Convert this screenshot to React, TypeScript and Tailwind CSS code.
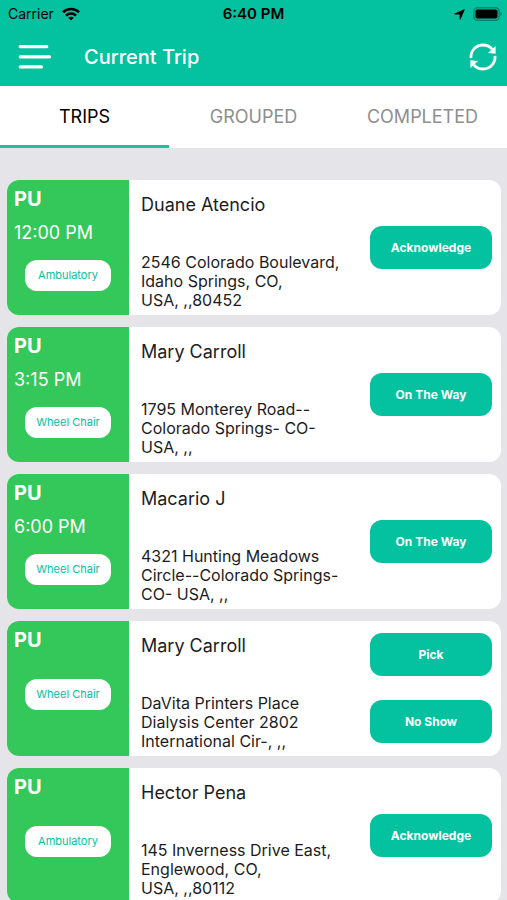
import clsx from "clsx";
import React, { useState } from "react";

type TripAction = "Acknowledge" | "On The Way" | "Pick" | "No Show";

interface Trip {
  id: number;
  type: string;
  time?: string;
  mobility: string;
  name: string;
  address: string;
  actions: TripAction[];
}

const TABS = ["TRIPS", "GROUPED", "COMPLETED"];

const TRIPS: Trip[] = [
  {
    id: 1,
    type: "PU",
    time: "12:00 PM",
    mobility: "Ambulatory",
    name: "Duane Atencio",
    address: "2546 Colorado Boulevard,\nIdaho Springs, CO,\nUSA, ,,80452",
    actions: ["Acknowledge"],
  },
  {
    id: 2,
    type: "PU",
    time: "3:15 PM",
    mobility: "Wheel Chair",
    name: "Mary Carroll",
    address: "1795 Monterey Road--\nColorado Springs- CO-\nUSA, ,,",
    actions: ["On The Way"],
  },
  {
    id: 3,
    type: "PU",
    time: "6:00 PM",
    mobility: "Wheel Chair",
    name: "Macario J",
    address: "4321 Hunting Meadows\nCircle--Colorado Springs-\nCO- USA, ,,",
    actions: ["On The Way"],
  },
  {
    id: 4,
    type: "PU",
    mobility: "Wheel Chair",
    name: "Mary Carroll",
    address: "DaVita Printers Place\nDialysis Center 2802\nInternational Cir-, ,,",
    actions: ["Pick", "No Show"],
  },
  {
    id: 5,
    type: "PU",
    mobility: "Ambulatory",
    name: "Hector Pena",
    address: "145 Inverness Drive East,\nEnglewood, CO,\nUSA, ,,80112",
    actions: ["Acknowledge"],
  },
];

const WifiIcon = () => (
  <svg width="18" height="14" viewBox="0 0 18 14" aria-hidden="true">
    <g fill="none" stroke="black" strokeWidth="2.7">
      <path d="M1 5.2C5.4 0.9 12.6 0.9 17 5.2" />
      <path d="M4 8.6C6.8 5.8 11.2 5.8 14 8.6" />
    </g>
    <path d="M9 13.6L6.2 10.8C7.7 9.4 10.3 9.4 11.8 10.8Z" />
  </svg>
);

const LocationIcon = () => (
  <svg width="11" height="11" viewBox="0 0 11 11" aria-hidden="true">
    <path d="M10.2 0.3C10.6 0.1 10.9 0.4 10.7 0.8L6.5 10.4C6.3 10.9 5.7 10.8 5.7 10.3L5.6 5.6L0.7 5.4C0.2 5.4 0.1 4.8 0.6 4.6Z" />
  </svg>
);

const BatteryIcon = () => (
  <svg width="30" height="14" viewBox="0 0 30 14" aria-hidden="true">
    <rect x="0.8" y="0.8" width="25.4" height="12.4" rx="3.6" fill="none" stroke="#04836d" strokeWidth="1.4" />
    <rect x="2.5" y="2.5" width="22" height="9" rx="1.8" />
    <path d="M27.4 4.8C29.4 5.5 29.4 8.5 27.4 9.2Z" fill="#04836d" />
  </svg>
);

const MenuIcon = () => (
  <svg width="34" height="26" viewBox="0 0 34 26" aria-hidden="true">
    <g stroke="white" strokeWidth="3.2" strokeLinecap="round">
      <path d="M2.2 2.7H28.8" />
      <path d="M2.2 12.8H31.6" />
      <path d="M2.2 22.9H23.4" />
    </g>
  </svg>
);

const RefreshIcon = () => (
  <svg width="28" height="28" viewBox="0 0 28 28" aria-hidden="true">
    <g fill="none" stroke="white" strokeWidth="2.8">
      <path d="M2 15.2C1.4 8 6.8 2 14 2C17.8 2 21 3.5 23.2 6.2" />
      <path d="M26 12.8C26.6 20 21.2 26 14 26C10.2 26 7 24.5 4.8 21.8" />
    </g>
    <path d="M26.6 2.9V10.7L18.9 9.9Z" fill="white" />
    <path d="M1.4 25.1V17.3L9.1 18.1Z" fill="white" />
  </svg>
);

const StatusBar = () => (
  <div className="grid h-7 grid-cols-3 items-center px-2 text-sm text-black">
    <div className="flex items-center gap-2">
      <span>Carrier</span>
      <WifiIcon />
    </div>
    <span className="text-center text-[15px] font-semibold">6:40 PM</span>
    <div className="-mr-1 flex items-center justify-end gap-2">
      <LocationIcon />
      <BatteryIcon />
    </div>
  </div>
);

const TripCard: React.FC<{ trip: Trip }> = ({ trip }) => (
  <li className="flex h-[135px] shrink-0 overflow-hidden rounded-xl bg-white">
    <div className="flex w-[122px] shrink-0 flex-col bg-[#34c759] pt-2 pl-[7px] text-white">
      <span className="text-xl leading-[22px] font-bold">{trip.type}</span>
      <div className="mt-3">
        {trip.time && <p className="text-lg leading-[22px]">{trip.time}</p>}
      </div>
      <span className="mt-4 ml-[11px] flex h-[31px] w-[86px] items-center justify-center rounded-xl bg-white text-[11px] text-[#04c1a0]">
        {trip.mobility}
      </span>
    </div>

    <div className="flex min-w-0 flex-1 flex-col justify-between pt-3.5 pb-[5px] pl-3 text-[#1c1c1e]">
      <h2 className="text-lg leading-[22px]">{trip.name}</h2>
      <p className="text-base leading-[19px] whitespace-pre-line">{trip.address}</p>
    </div>

    <div
      className={clsx(
        "flex w-[131px] shrink-0 flex-col gap-6 pr-[9px]",
        trip.actions.length > 1 ? "pt-3" : "justify-center"
      )}
    >
      {trip.actions.map((action) => (
        <button
          key={action}
          type="button"
          className="h-[43px] w-full rounded-xl bg-[#04c1a0] text-xs font-bold text-white"
        >
          {action}
        </button>
      ))}
    </div>
  </li>
);

const App = () => {
  const [activeTab, setActiveTab] = useState("TRIPS");

  return (
    <div className="flex h-screen flex-col bg-[#e4e4e9] font-['Inter',sans-serif]">
      <header className="shrink-0 bg-[#04c1a0]">
        <StatusBar />
        <div className="flex h-[58px] items-center px-[18px]">
          <button type="button" aria-label="Menu">
            <MenuIcon />
          </button>
          <h1 className="ml-8 flex-1 text-xl font-medium text-white">Current Trip</h1>
          <button type="button" aria-label="Refresh" className="-mr-2">
            <RefreshIcon />
          </button>
        </div>
      </header>

      <nav className="grid h-[62px] shrink-0 grid-cols-3 bg-white">
        {TABS.map((tab) => (
          <button
            key={tab}
            type="button"
            onClick={() => setActiveTab(tab)}
            className={clsx(
              "border-y-[3px] border-t-transparent text-lg",
              tab === activeTab ? "border-b-[#1fc0a0] text-black" : "border-b-transparent text-[#8e8e8e]"
            )}
          >
            {tab}
          </button>
        ))}
      </nav>

      <ul className="flex min-h-0 flex-1 flex-col gap-3 overflow-y-auto pt-8 pr-1.5 pl-[7px] [scrollbar-width:none]">
        {TRIPS.map((trip) => (
          <TripCard key={trip.id} trip={trip} />
        ))}
      </ul>
    </div>
  );
};

export default App;
